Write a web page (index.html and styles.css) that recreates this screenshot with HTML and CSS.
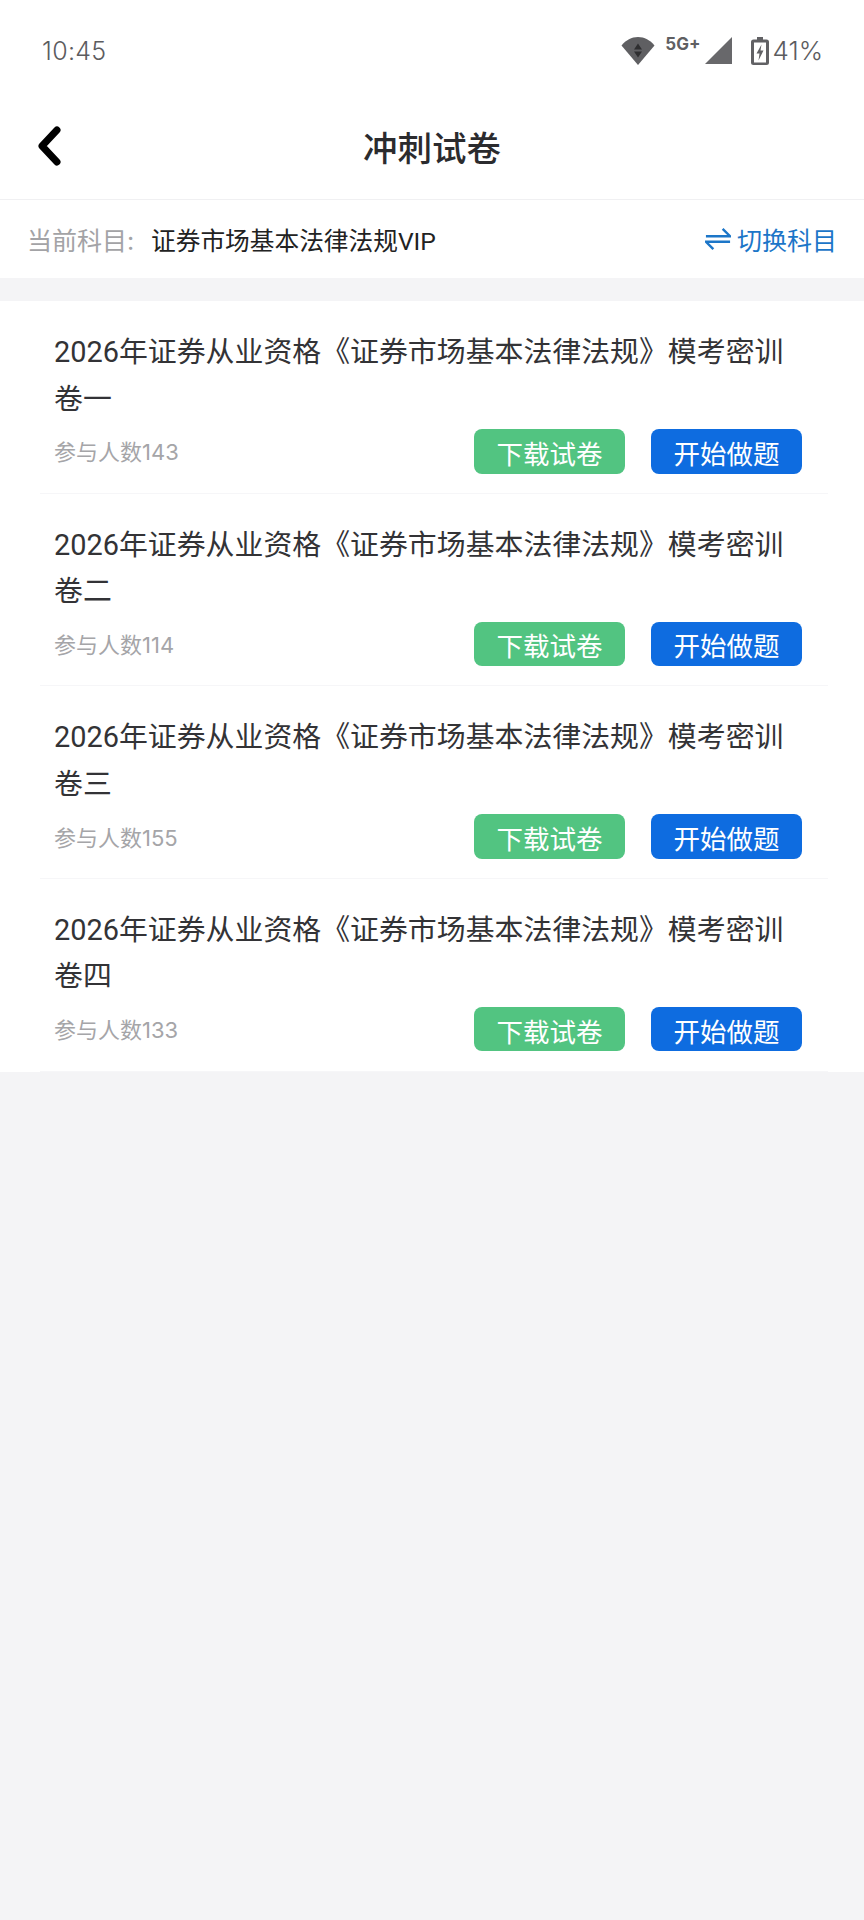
FILE: index.html
```html
<!DOCTYPE html>
<html lang="zh-CN">
<head>
    <meta charset="UTF-8">
    <meta name="viewport" content="width=device-width, initial-scale=1.0">
    <title>冲刺试卷</title>
    <link rel="stylesheet" href="styles.css">
</head>
<body>
    <div class="status-bar">
        <span class="time">10:45</span>
        <div class="status-icons">
            <svg class="wifi" width="34" height="28" viewBox="0 0 34 28">
                <path d="M17 28 0.5 8.5C5 3 10.500 0 17 0s12 3 16.500 8.500z" fill="#5f5f62"/>
                <path d="M17 6.500 21 12.500H13zM17 20.500 13 14.500H21z" fill="#2e2e30"/>
            </svg>
            <span class="network">5G+</span>
            <svg class="signal" width="27" height="27" viewBox="0 0 27 27">
                <path d="M27 0V27H0z" fill="#68686b"/>
            </svg>
            <svg class="battery" width="18" height="28" viewBox="0 0 18 28">
                <path d="M6 0h6v2.500h3.500Q18 2.500 18 5v20.500Q18 28 15.500 28h-13Q0 28 0 25.500V5q0-2.500 2.500-2.500H6z" fill="#616164"/>
                <path d="M3 5.500h12v20H3z" fill="#fff"/>
                <path d="M10.500 7.500 5.500 16.500H8.500L7.500 23.500 12.500 13.500H9.500z" fill="#616164"/>
            </svg>
            <span class="percent">41%</span>
        </div>
    </div>

    <header class="nav-bar">
        <svg class="back" width="26" height="40" viewBox="0 0 26 40">
            <path d="M21 4 6 20 21 36" fill="none" stroke="#000" stroke-width="7" stroke-linecap="round" stroke-linejoin="round"/>
        </svg>
        <h1>冲刺试卷</h1>
    </header>

    <div class="subject-bar">
        <span class="subject-label">当前科目:</span>
        <span class="subject-name">证券市场基本法律法规VIP</span>
        <a class="switch" href="#">
            <svg width="26" height="26" viewBox="0 0 28 26">
                <path d="M1 10H27L19 2M27 16H1L9 24" fill="none" stroke="#1c76c8" stroke-width="2.600"/>
            </svg>
            切换科目
        </a>
    </div>

    <main class="paper-list">
        <div class="paper">
            <div class="paper-title">2026年证券从业资格《证券市场基本法律法规》模考密训卷一</div>
            <div class="paper-meta">
                <span class="count">参与人数143</span>
                <button class="btn btn-download" type="button">下载试卷</button>
                <button class="btn btn-start" type="button">开始做题</button>
            </div>
        </div>
        <div class="paper">
            <div class="paper-title">2026年证券从业资格《证券市场基本法律法规》模考密训卷二</div>
            <div class="paper-meta">
                <span class="count">参与人数114</span>
                <button class="btn btn-download" type="button">下载试卷</button>
                <button class="btn btn-start" type="button">开始做题</button>
            </div>
        </div>
        <div class="paper">
            <div class="paper-title">2026年证券从业资格《证券市场基本法律法规》模考密训卷三</div>
            <div class="paper-meta">
                <span class="count">参与人数155</span>
                <button class="btn btn-download" type="button">下载试卷</button>
                <button class="btn btn-start" type="button">开始做题</button>
            </div>
        </div>
        <div class="paper">
            <div class="paper-title">2026年证券从业资格《证券市场基本法律法规》模考密训卷四</div>
            <div class="paper-meta">
                <span class="count">参与人数133</span>
                <button class="btn btn-download" type="button">下载试卷</button>
                <button class="btn btn-start" type="button">开始做题</button>
            </div>
        </div>
    </main>
</body>
</html>
```

FILE: styles.css
```css
* {
    box-sizing: border-box;
}

html, body {
    height: 100%;
}

body {
    margin: 0;
    background: #f4f4f6;
    font-family: "Inter", "Noto Sans CJK SC", sans-serif;
    color: #333;
    overflow: hidden;
}

.status-bar {
    height: 100px;
    background: #fff;
    display: flex;
    justify-content: space-between;
    align-items: center;
    padding: 1px 41px 0 42px;
}

.time {
    font-size: 25px;
    font-weight: 300;
    color: #5c5c5f;
    letter-spacing: 0.3px;
}

.status-icons {
    display: flex;
    align-items: center;
}

.network {
    font-size: 17px;
    font-weight: 700;
    color: #5f5f62;
    margin: -14px 5px 0 10px;
}

.battery {
    margin-left: 19px;
}

.percent {
    font-size: 26px;
    font-weight: 300;
    color: #5c5c5f;
    margin-left: 3px;
}

.nav-bar {
    height: 100px;
    background: #fff;
    border-bottom: 1px solid #f0f0f2;
    display: flex;
    align-items: center;
    justify-content: center;
    padding-bottom: 8px;
    position: relative;
}

.nav-bar h1 {
    margin: 0;
    font-size: 34.5px;
    font-weight: 500;
    color: #2b2b2e;
}

.back {
    position: absolute;
    left: 36px;
    top: 26px;
}

.subject-bar {
    height: 78px;
    background: #fff;
    display: flex;
    align-items: center;
    padding: 0 27px;
    font-size: 25px;
}

.subject-label {
    color: #a3a3a6;
    width: 124px;
    white-space: nowrap;
}

.subject-name {
    font-family: "Roboto", "Noto Sans CJK SC", sans-serif;
    font-size: 24.7px;
    color: #222;
    flex: 1;
}

.switch {
    display: flex;
    align-items: center;
    gap: 6px;
    color: #1c76c8;
    text-decoration: none;
}

.paper-list {
    margin-top: 23px;
    background: #fff;
    padding: 0 36px 0 40px;
}

.paper {
    height: 192.67px;
    padding: 28px 16px 0 14px;
    border-bottom: 1px solid #f6f6f8;
}

.paper-title {
    font-family: "Roboto", "Noto Sans CJK SC", sans-serif;
    font-size: 28.9px;
    line-height: 46.5px;
    color: #333336;
    width: 745px;
}

.paper-meta {
    display: flex;
    align-items: center;
    margin-top: 7px;
    padding-right: 10px;
    gap: 26px;
}

.count {
    flex: 1;
    font-size: 22px;
    color: #a5a5a8;
    margin-top: -2px;
}

.btn {
    width: 151px;
    height: 44.5px;
    border: none;
    border-radius: 8px;
    padding: 2px 0 0;
    font-family: inherit;
    font-size: 26.5px;
    color: #fff;
}

.btn-download {
    background: #52c481;
}

.btn-start {
    background: #0e6ce0;
}
```
